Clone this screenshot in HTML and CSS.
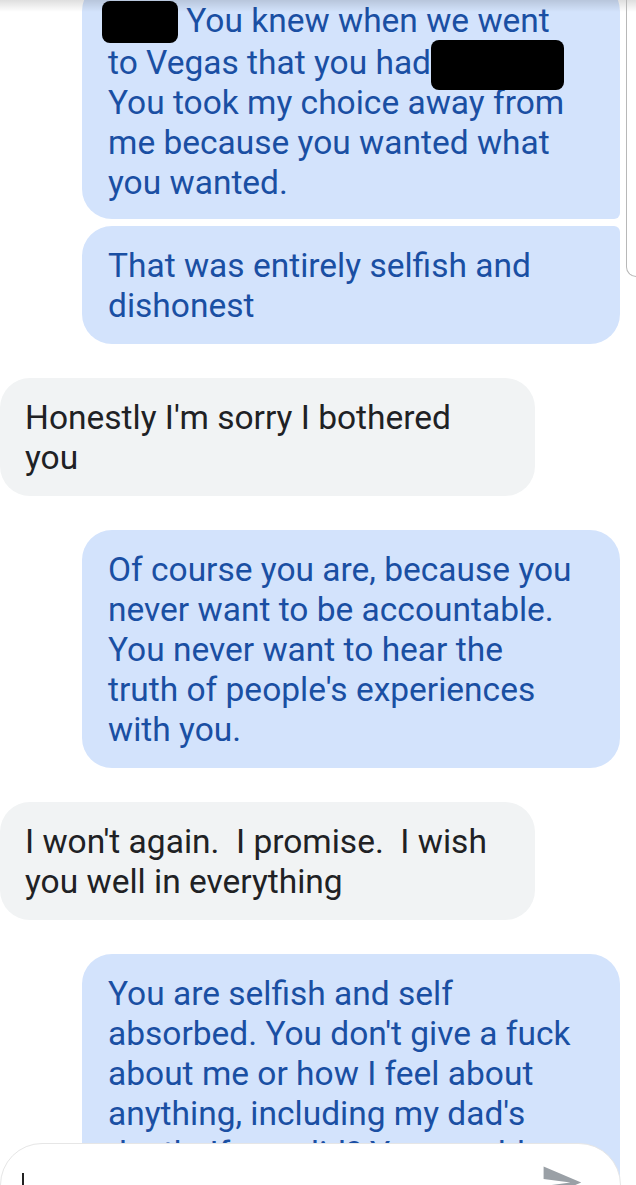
FILE: index.html
```html
<!DOCTYPE html>
<html lang="en">
<head>
  <meta charset="UTF-8">
  <title>Messages</title>
  <link rel="stylesheet" href="styles.css">
</head>
<body>

<div class="screen">
  <div class="thread">
    <div class="group out">
      <div class="bubble sent first"><span class="redact r1"></span> You knew when we went<br>to Vegas that you had<span class="redact r2"></span><br>You took my choice away from<br>me because you wanted what<br>you wanted.</div>
      <div class="bubble sent last">That was entirely selfish and<br>dishonest</div>
    </div>

    <div class="bubble recv">Honestly I'm sorry I bothered<br>you</div>

    <div class="bubble sent">Of course you are, because you<br>never want to be accountable.<br>You never want to hear the<br>truth of people's experiences<br>with you.</div>

    <div class="bubble recv">I won't again.&nbsp; I promise.&nbsp; I wish<br>you well in everything</div>

    <div class="bubble sent">You are selfish and self<br>absorbed. You don't give a fuck<br>about me or how I feel about<br>anything, including my dad's<br>death. If you did? You would<br>have told me.</div>
  </div>

  <!-- overlays -->
  <div class="top-shade"></div>
  <div class="scroll-edge"></div>

  <div class="composer">
    <span class="caret"></span>
    <svg class="send" viewBox="0 0 24 24" width="43" height="43">
      <path d="M2.01 21L23 12 2.01 3 2 10l15 2-15 2z" fill="#9aa0a6"/>
    </svg>
  </div>
</div>

</body>
</html>
```

FILE: styles.css
```css
body {
  margin: 0;
  background: #fff;
  font-family: Roboto, "Noto Sans", sans-serif;
}
.screen {
  position: relative;
  width: 636px;
  height: 1185px;
  overflow: hidden;
}
.thread {
  display: flex;
  flex-direction: column;
  gap: 34px;
  margin-top: -19px;
}
.group {
  display: flex;
  flex-direction: column;
  gap: 7px;
}
.bubble {
  box-sizing: border-box;
  padding: 20px 26px 18px 26px;
  font-size: 33.5px;
  line-height: 40px;
  border-radius: 30px;
}
.sent {
  align-self: flex-end;
  width: 538px;
  margin-right: 16px;
  background: #d3e3fc;
  color: #1a4fa3;
}
.recv {
  align-self: flex-start;
  width: 535px;
  padding-left: 25px;
  background: #f1f3f4;
  color: #202124;
}
.sent.first {
  padding-bottom: 16px;
  border-bottom-right-radius: 6px;
}
.sent.last {
  border-top-right-radius: 6px;
}
.redact {
  display: inline-block;
  background: #000;
  border-radius: 8px;
  vertical-align: middle;
}
.r1 {
  width: 76px;
  height: 42px;
  margin: -2px 0 0 -6px;
}
.r2 {
  width: 133px;
  height: 50px;
  margin: -8px -40px -6px 0;
  position: relative;
  top: 1px;
}
.top-shade {
  position: absolute;
  top: 0;
  left: 0;
  right: 0;
  height: 12px;
  background: linear-gradient(rgba(0,0,0,0.13), rgba(0,0,0,0));
}
.scroll-edge {
  position: absolute;
  top: -10px;
  left: 626px;
  width: 20px;
  height: 286px;
  border-left: 1px solid #b8b8b8;
  border-bottom: 1px solid #b8b8b8;
  border-bottom-left-radius: 10px;
}
.composer {
  position: absolute;
  left: 0;
  top: 1143px;
  width: 621px;
  height: 80px;
  background: #fff;
  border: 1px solid #e6e6e6;
  border-radius: 42px 42px 0 0;
  box-sizing: border-box;
}
.caret {
  position: absolute;
  left: 21px;
  top: 29px;
  width: 2px;
  height: 20px;
  background: #222;
}
.send {
  position: absolute;
  left: 539px;
  top: 17px;
}
```
